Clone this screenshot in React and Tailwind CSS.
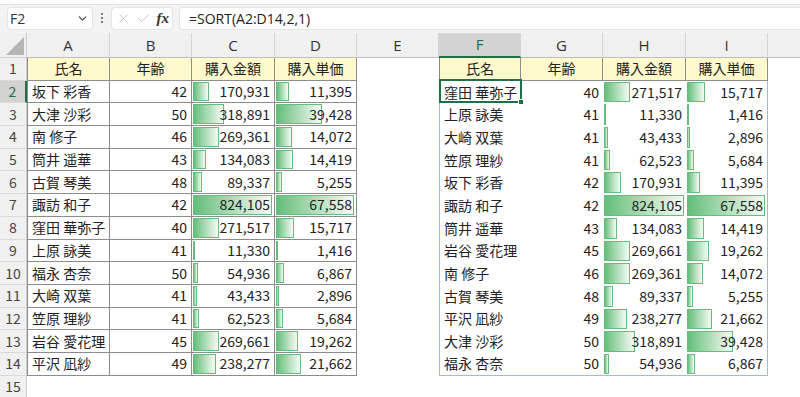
import { ChevronDown, X, Check } from "lucide-react";

const LEFT = [
  ["坂下 彩香", 42, 170931, 11395],
  ["大津 沙彩", 50, 318891, 39428],
  ["南 修子", 46, 269361, 14072],
  ["筒井 遥華", 43, 134083, 14419],
  ["古賀 琴美", 48, 89337, 5255],
  ["諏訪 和子", 42, 824105, 67558],
  ["窪田 華弥子", 40, 271517, 15717],
  ["上原 詠美", 41, 11330, 1416],
  ["福永 杏奈", 50, 54936, 6867],
  ["大崎 双葉", 41, 43433, 2896],
  ["笠原 理紗", 41, 62523, 5684],
  ["岩谷 愛花理", 45, 269661, 19262],
  ["平沢 凪紗", 49, 238277, 21662],
];

// =SORT(A2:D14,2,1) — stable sort by age
const RIGHT = [...LEFT].map((r, i) => [r, i]).sort((a, b) => a[0][1] - b[0][1] || a[1] - b[1]).map((x) => x[0]);

const MAX_C = Math.max(...LEFT.map((r) => r[2]));
const MAX_D = Math.max(...LEFT.map((r) => r[3]));

const HEADERS = ["氏名", "年齢", "購入金額", "購入単価"];
const COLS = ["A", "B", "C", "D", "E", "F", "G", "H", "I", "J"];
const COL_W = {
  A: "w-[83px]",
  B: "w-[82px]",
  C: "w-[83px]",
  D: "w-[82px]",
  E: "w-[82px]",
  F: "w-[82px]",
  G: "w-[82px]",
  H: "w-[83px]",
  I: "w-[82px]",
  J: "w-[82px]",
};

const fmt = (n) => n.toLocaleString("en-US");

const Bar = ({ value, max, cellW }) => (
  <div
    className="absolute left-[1px] top-[1px] bottom-[1px] bg-linear-to-r from-[#63be7b] to-[#f4fbf6] border border-[#63be7b]"
    style={{ width: Math.max(1.5, (value / max) * (cellW - 3)) }}
  />
);

const RowHead = ({ n, active }) => (
  <div
    className={`w-[27px] shrink-0 flex items-center justify-center text-[14px] border-b border-[#dadada] ${
      active
        ? "bg-[#d2d2d2] text-[#1e7145] border-r-2 border-r-[#1e7145]"
        : "bg-[#f0f0f0] text-[#444] border-r border-r-[#cfcfcf]"
    }`}
  >
    {n}
  </div>
);

const Cell = ({ col, className = "", children }) => (
  <div className={`${COL_W[col]} shrink-0 relative flex items-center ${className}`}>{children}</div>
);

const Txt = ({ right, center, children }) => (
  <span
    className={`relative z-10 w-full px-[4px] whitespace-nowrap ${
      right ? "text-right" : center ? "text-center" : "text-left"
    }`}
  >
    {children}
  </span>
);

export default function App() {
  return (
    <div
      className="w-[800px] h-[397px] overflow-hidden bg-white text-[#222] text-[14px]"
      style={{ fontFamily: '"Noto Sans CJK JP", "Noto Sans", sans-serif' }}
    >
      {/* formula bar */}
      <div className="h-[33px] bg-[#f3f3f3] border-t border-[#e2e2e2] flex items-center gap-[6px] pl-[7px] mt-[4px] -mb-[4px]">
        <div className="w-[86px] h-[23px] bg-white rounded-[4px] border border-[#e4e4e4] flex items-center justify-between pl-[2px] pr-[3px] -mt-[6px]">
          <span className="text-[14px] text-[#333]" style={{ fontFamily: '"Open Sans", sans-serif' }}>
            F2
          </span>
          <ChevronDown size={13} strokeWidth={2} className="text-[#444]" />
        </div>
        <div className="flex flex-col gap-[2px] -mt-[6px] px-[2px]">
          <div className="w-[2px] h-[2px] bg-[#555] rounded-full" />
          <div className="w-[2px] h-[2px] bg-[#555] rounded-full" />
          <div className="w-[2px] h-[2px] bg-[#555] rounded-full" />
        </div>
        <div className="w-[62px] h-[23px] bg-white rounded-[4px] border border-[#e4e4e4] flex items-center justify-between pl-[4px] pr-[3px] -mt-[6px]">
          <X size={15} strokeWidth={1.2} className="text-[#b4b4b4]" />
          <Check size={15} strokeWidth={1.2} className="text-[#b4b4b4]" />
          <span className="italic text-[15px] text-[#333] font-semibold" style={{ fontFamily: '"Liberation Serif", serif' }}>
            fx
          </span>
        </div>
        <div className="flex-1 h-[23px] bg-white rounded-l-[4px] border border-r-0 border-[#e4e4e4] flex items-center pl-[9px] -mt-[6px]">
          <span className="text-[14px] text-[#222]" style={{ fontFamily: '"Open Sans", sans-serif' }}>
            =SORT(A2:D14,2,1)
          </span>
        </div>
      </div>

      {/* column headers */}
      <div className="flex h-[25px]">
        <div className="w-[27px] shrink-0 bg-[#f0f0f0] border-r border-b border-[#cfcfcf] flex items-end justify-end p-[2px]">
          <svg width="18" height="18" viewBox="0 0 18 18">
            <polygon points="18,0 18,18 0,18" fill="#b5b5b5" />
          </svg>
        </div>
        {COLS.map((c) => (
          <div
            key={c}
            className={`${COL_W[c]} shrink-0 flex items-center justify-center text-[15px] border-r border-[#d4d4d4] ${
              c === "F"
                ? "bg-[#d3d3d3] text-[#1e7145] border-b-2 border-b-[#1e7145]"
                : "bg-[#f0f0f0] text-[#333] border-b border-b-[#bdbdbd]"
            }`}
            style={{ fontFamily: '"Open Sans", sans-serif' }}
          >
            {c === "J" ? "" : c}
          </div>
        ))}
      </div>

      {/* row 1 : headers */}
      <div className="flex h-[22.7px]">
        <RowHead n={1} />
        {HEADERS.map((h, i) => (
          <Cell
            key={h}
            col={COLS[i]}
            className={`bg-[#fff9cc] border-r border-b border-[#8c8c8c] ${i === 0 ? "border-l" : ""}`}
          >
            <Txt center>{h}</Txt>
          </Cell>
        ))}
        <Cell col="E" />
        {HEADERS.map((h, i) => (
          <Cell
            key={h + "r"}
            col={COLS[i + 5]}
            className={`bg-[#fff9cc] border-r border-b border-[#8c8c8c] ${i === 0 ? "border-l" : ""}`}
          >
            <Txt center>{h}</Txt>
          </Cell>
        ))}
        <Cell col="J" />
      </div>

      {/* rows 2-14 */}
      {LEFT.map((l, idx) => {
        const r = RIGHT[idx];
        const last = idx === LEFT.length - 1;
        const blueB = last ? "border-b border-b-[#9dbbe6]" : "";
        return (
          <div key={idx} className="flex h-[22.7px]">
            <RowHead n={idx + 2} active={idx === 0} />
            <Cell col="A" className="border-l border-r border-b border-[#8c8c8c]">
              <Txt>{l[0]}</Txt>
            </Cell>
            <Cell col="B" className="border-r border-b border-[#8c8c8c]">
              <Txt right>{l[1]}</Txt>
            </Cell>
            <Cell col="C" className="border-r border-b border-[#8c8c8c]">
              <Bar value={l[2]} max={MAX_C} cellW={82} />
              <Txt right>{fmt(l[2])}</Txt>
            </Cell>
            <Cell col="D" className="border-r border-b border-[#8c8c8c]">
              <Bar value={l[3]} max={MAX_D} cellW={81} />
              <Txt right>{fmt(l[3])}</Txt>
            </Cell>
            <Cell col="E" />
            <Cell col="F" className={`border-l border-l-[#9dbbe6] ${blueB}`}>
              <Txt>{r[0]}</Txt>
              {idx === 0 && (
                <div className="absolute -left-[1px] -top-[2px] -right-[1px] bottom-0 border-2 border-[#1e7145] z-20">
                  <div className="absolute -right-[4px] -bottom-[4px] w-[6px] h-[6px] bg-[#1e7145] border border-white" />
                </div>
              )}
            </Cell>
            <Cell col="G" className={blueB}>
              <Txt right>{r[1]}</Txt>
            </Cell>
            <Cell col="H" className={blueB}>
              <Bar value={r[2]} max={MAX_C} cellW={83} />
              <Txt right>{fmt(r[2])}</Txt>
            </Cell>
            <Cell col="I" className={`border-r border-r-[#9dbbe6] ${blueB}`}>
              <Bar value={r[3]} max={MAX_D} cellW={81} />
              <Txt right>{fmt(r[3])}</Txt>
            </Cell>
            <Cell col="J" />
          </div>
        );
      })}

      {/* row 15 */}
      <div className="flex h-[22.7px]">
        <RowHead n={15} />
      </div>
    </div>
  );
}
